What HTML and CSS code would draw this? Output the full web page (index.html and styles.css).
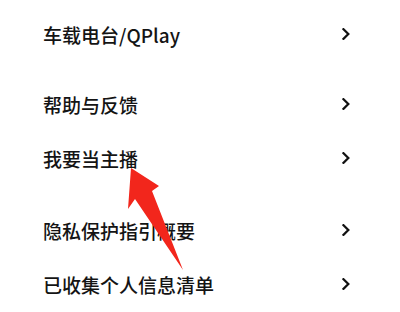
FILE: index.html
```html
<!DOCTYPE html>
<html lang="zh-CN">
<head>
<meta charset="utf-8">
<link rel="stylesheet" href="styles.css">
</head>
<body>
<div class="page">
  <div class="group g1">
    <div class="row"><span class="label">车载电台/QPlay</span><svg class="chev" viewBox="0 0 8 12" width="8" height="12"><path d="M1.5 1.2 L6.3 6 L1.5 10.8" /></svg></div>
  </div>
  <div class="group g2">
    <div class="row"><span class="label">帮助与反馈</span><svg class="chev" viewBox="0 0 8 12" width="8" height="12"><path d="M1.5 1.2 L6.3 6 L1.5 10.8" /></svg></div>
    <div class="row"><span class="label">我要当主播</span><svg class="chev" viewBox="0 0 8 12" width="8" height="12"><path d="M1.5 1.2 L6.3 6 L1.5 10.8" /></svg></div>
  </div>
  <div class="group g3">
    <div class="row"><span class="label">隐私保护指引概要</span><svg class="chev" viewBox="0 0 8 12" width="8" height="12"><path d="M1.5 1.2 L6.3 6 L1.5 10.8" /></svg></div>
    <div class="row"><span class="label">已收集个人信息清单</span><svg class="chev" viewBox="0 0 8 12" width="8" height="12"><path d="M1.5 1.2 L6.3 6 L1.5 10.8" /></svg></div>
  </div>
  <svg class="arrow" viewBox="0 0 400 312" width="400" height="312"><polygon points="131,168 159,186 152,191 183,270 135,199 128,209" /></svg>
</div>
</body>
</html>
```

FILE: styles.css
```css
html, body {
  margin: 0;
  padding: 0;
  background: #ffffff;
}
.page {
  position: relative;
  width: 400px;
  height: 312px;
  overflow: hidden;
  padding-top: 7px;
  box-sizing: border-box;
  font-family: "Noto Sans CJK SC", "Noto Sans", sans-serif;
  color: #141414;
}
.group {
  display: flex;
  flex-direction: column;
}
.g2 { margin-top: 16px; }
.g3 { margin-top: 18px; }
.row {
  height: 54px;
  display: flex;
  align-items: center;
  justify-content: space-between;
  padding: 0 50px 0 43px;
}
.label {
  font-size: 19px;
  font-weight: 500;
  line-height: 1;
}
.chev {
  fill: none;
  stroke: #111;
  stroke-width: 2.3;
  stroke-linecap: square;
}
.arrow {
  position: absolute;
  left: 0;
  top: 0;
}
.arrow polygon {
  fill: #f2261c;
}
```
